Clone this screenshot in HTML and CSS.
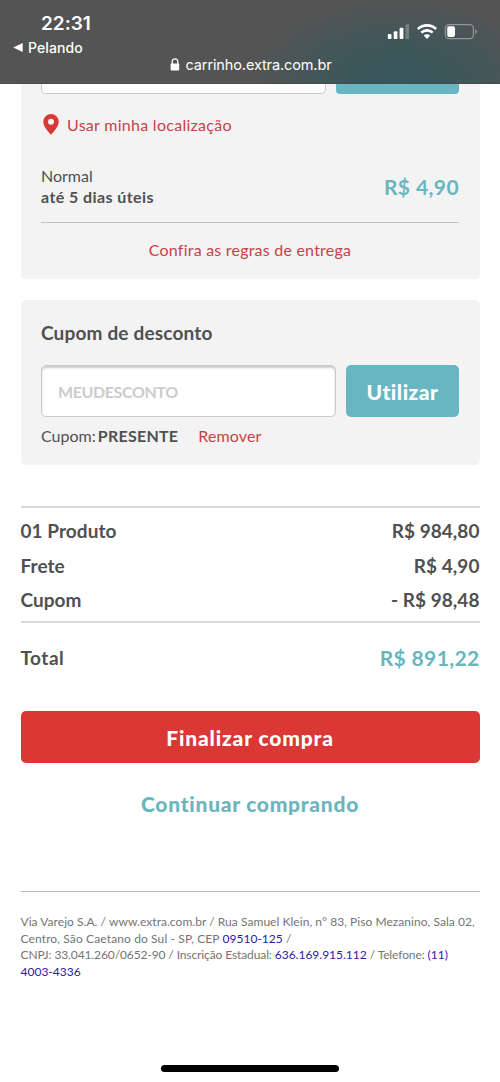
FILE: index.html
```html
<!DOCTYPE html>
<html lang="pt-BR">
<head>
<meta charset="utf-8">
<title>Carrinho</title>
<link rel="stylesheet" href="styles.css">
</head>
<body>
<header class="browser-bar">
  <div class="status-left">
    <div class="clock"><span>22:31</span></div>
    <div class="back"><svg width="10" height="9" viewBox="0 0 10 9"><path d="M.3 4.5 9.7 0v9z" fill="#fff"/></svg><span class="back-label">Pelando</span></div>
  </div>
  <div class="address">
    <svg width="10" height="13" viewBox="0 0 10 13"><path d="M2.2 6V3.8a2.7 2.9 0 0 1 5.6 0V6" fill="none" stroke="#fff" stroke-width="1.3"/><rect x=".6" y="5.4" width="8.6" height="7" rx="1" fill="#fff"/></svg>
    <span class="domain">carrinho.extra.com.br</span>
  </div>
  <svg class="status-icons" width="92" height="18" viewBox="0 0 92 18">
    <g fill="#fff">
      <rect x=".8" y="11" width="3.7" height="5" rx="1"/>
      <rect x="6.7" y="8.3" width="3.7" height="7.7" rx="1"/>
      <rect x="12.6" y="4.8" width="3.8" height="11.2" rx="1"/>
      <rect x="18.5" y="1.3" width="3.6" height="14.7" rx="1" opacity=".25"/>
    </g>
    <g fill="none" stroke="#fff" stroke-width="2.6">
      <path d="M30.9 6a13.2 13.2 0 0 1 18.2 0"/>
      <path d="M34.3 9.6a8.3 8.3 0 0 1 11.4 0"/>
    </g>
    <path d="M36.8 12.5a4.6 4.6 0 0 1 6.4 0L40 16z" fill="#fff"/>
    <rect x="58.4" y="1.6" width="28" height="14" rx="3.6" fill="none" stroke="#92979a" stroke-width="1.2"/>
    <path d="M88.2 6.3c2.3.8 2.3 3.8 0 4.6z" fill="#92979a"/>
    <rect x="60.2" y="3.3" width="7.8" height="10.6" rx="1.8" fill="#fff"/>
  </svg>
</header>
<main class="cart">
  <section class="panel shipping">
    <div class="zip-row"><div class="zip-field"></div><div class="zip-button"></div></div>
    <a class="locate"><svg width="16" height="21" viewBox="0 0 16 21"><path fill="#da3735" fill-rule="evenodd" d="M8 0a7.7 7.7 0 0 0-7.7 7.7C.3 13 6 18 8 21c2-3 7.7-8 7.7-13.3A7.7 7.7 0 0 0 8 0zm0 4.8a3 3 0 1 1 0 6 3 3 0 0 1 0-6z"/></svg><span class="locate-label">Usar minha localização</span></a>
    <div class="delivery">
      <div class="delivery-type"><span class="t-normal">Normal</span><br><b class="t-days">até 5 dias úteis</b></div>
      <b class="t-fee">R$ 4,90</b>
    </div>
    <a class="rules"><span class="t-rules">Confira as regras de entrega</span></a>
  </section>
  <section class="panel coupon">
    <h2><span class="t-coupon">Cupom de desconto</span></h2>
    <div class="coupon-row">
      <div class="coupon-field"><span class="t-hint">MEUDESCONTO</span></div>
      <div class="coupon-button"><span class="t-use">Utilizar</span></div>
    </div>
    <div class="applied"><span class="t-applied">Cupom: <b>PRESENTE</b></span><a class="t-remove">Remover</a></div>
  </section>
  <section class="summary">
    <div class="line"><span class="t-product">01 Produto</span><span class="t-v1">R$ 984,80</span></div>
    <div class="line"><span class="t-frete">Frete</span><span class="t-v2">R$ 4,90</span></div>
    <div class="line"><span class="t-cupom">Cupom</span><span class="t-v3">- R$ 98,48</span></div>
  </section>
  <div class="total"><span class="t-total">Total</span><span class="t-sum">R$ 891,22</span></div>
  <div class="checkout"><span class="t-checkout">Finalizar compra</span></div>
  <a class="continue"><span class="t-continue">Continuar comprando</span></a>
  <footer>
    <span class="f1">Via Varejo S.A. / www.extra.com.br / Rua Samuel Klein, n° 83, Piso Mezanino, Sala 02,</span><br>
    <span class="f2">Centro, São Caetano do Sul - SP, CEP <a>09510-125</a> /</span><br>
    <span class="f3">CNPJ: 33.041.260/0652-90 / Inscrição Estadual: <a>636.169.915.112</a> / Telefone: <a>(11)</a></span><br>
    <a class="f4">4003-4336</a>
  </footer>
</main>
<div class="home-indicator"></div>
</body>
</html>
```
FILE: styles.css
```css
* { box-sizing: border-box; }
body { margin: 0; width: 500px; height: 1082px; display: flex; flex-direction: column; overflow: hidden; background: #fff; color: #505050; font-family: Lato, "Open Sans", sans-serif; font-size: 16px; font-variant-ligatures: none; }
svg { display: block; flex: none; }
span, b { white-space: nowrap; }
.browser-bar { height: 84px; flex: none; display: grid; grid-template-columns: 150px 1fr 150px; color: #fff; font-family: Inter, sans-serif; background: radial-gradient(ellipse 150px 85px at 398px 84px, #38565a 0%, #3d575a 40%, rgba(84,84,84,0) 100%), #545454; border-bottom: 1px solid #494b4b; }
.status-left { grid-row: 1; padding: 11px 0 0 13px; }
.clock { padding-left: 28px; height: 25px; font-size: 19px; line-height: 25px; font-weight: 600; }
.back { display: flex; align-items: center; gap: 5px; height: 23px; font-size: 14px; font-weight: 500; letter-spacing: .1px; }
.address { grid-column: 2; grid-row: 1; align-self: end; justify-self: center; display: flex; align-items: center; gap: 6px; height: 20px; margin-bottom: 9px; padding-left: 1px; font-size: 14.5px; }
.domain { letter-spacing: -.12px; }
.status-icons { grid-column: 3; grid-row: 1; margin: 23px 0 0 37px; }
.cart { padding: 0 20.5px; flex: 1; }
.panel { background: #f3f3f3; padding: 0 20.5px; }
.shipping { height: 195px; border-radius: 0 0 4px 4px; }
.zip-row { display: flex; gap: 10px; height: 10px; }
.zip-field { width: 285px; background: #fff; border: 1px solid #c9c9c9; border-top: 0; border-radius: 0 0 5px 5px; }
.zip-button { flex: 1; background: #69b6c3; border-radius: 0 0 4px 4px; }
.locate { display: flex; align-items: center; gap: 8px; height: 20px; margin-top: 20px; padding-left: 2px; color: #c94147; letter-spacing: .28px; }
.delivery { display: flex; justify-content: space-between; align-items: center; height: 57px; margin-top: 32px; padding-bottom: 17px; line-height: 21px; border-bottom: 1px solid #c2c2c2; }
.t-days { letter-spacing: .42px; }
.t-fee { padding-top: 1px; color: #69b6bd; font-size: 21px; letter-spacing: .4px; }
.rules { display: flex; justify-content: center; align-items: center; height: 52px; color: #c94147; letter-spacing: .22px; }
.coupon { height: 165px; margin-top: 21px; padding-top: 19px; border-radius: 5px; }
h2 { margin: 0; font-size: 19px; line-height: 27px; height: 46px; letter-spacing: .17px; }
.coupon-row { display: flex; gap: 10px; height: 52px; }
.coupon-field { width: 295px; display: flex; align-items: center; padding-left: 16px; background: #fff; border: 1px solid #c9c9c9; border-radius: 5px; box-shadow: inset 0 2px 2px #ccc; color: #ccc; font-weight: 700; letter-spacing: -.4px; }
.coupon-button { flex: 1; display: flex; align-items: center; justify-content: center; background: #69b6c3; color: #fff; border-radius: 5px; font-size: 21px; font-weight: 900; letter-spacing: .5px; }
.applied { display: flex; gap: 20px; height: 37px; line-height: 37px; }
.t-applied { word-spacing: -2px; }
.t-applied b { letter-spacing: .25px; }
.t-remove { color: #c94147; letter-spacing: .15px; }
.summary { height: 117px; margin-top: 41px; padding-top: 5px; border-top: 2px solid #d9d9d9; border-bottom: 2px solid #d9d9d9; font-size: 19px; font-weight: 700; }
.line { display: flex; justify-content: space-between; height: 34.7px; line-height: 35px; letter-spacing: .05px; }
.total { display: flex; justify-content: space-between; align-items: center; height: 68px; font-size: 19px; font-weight: 700; }
.t-total { letter-spacing: .5px; }
.t-sum { color: #69b6bd; font-size: 21px; letter-spacing: .35px; }
.checkout { display: flex; align-items: center; justify-content: center; height: 52px; margin-top: 20px; border-radius: 5px; background: #da3735; color: #fff; font-size: 21px; font-weight: 900; letter-spacing: .85px; }
.continue { display: flex; justify-content: center; align-items: center; height: 80px; color: #69b6bd; font-size: 21px; font-weight: 900; letter-spacing: .72px; }
footer { margin-top: 48px; padding-top: 22px; border-top: 1px solid #bdbdbd; font-size: 12px; line-height: 16.7px; color: #747474; }
footer a { color: #2b20a4; letter-spacing: 0; }
.f1 { letter-spacing: .045px; }
.f2 { letter-spacing: .12px; }
.f3 { letter-spacing: -.11px; }
.home-indicator { width: 178px; height: 7px; flex: none; margin: 0 auto 10px; border-radius: 4px; background: #000; }
```
